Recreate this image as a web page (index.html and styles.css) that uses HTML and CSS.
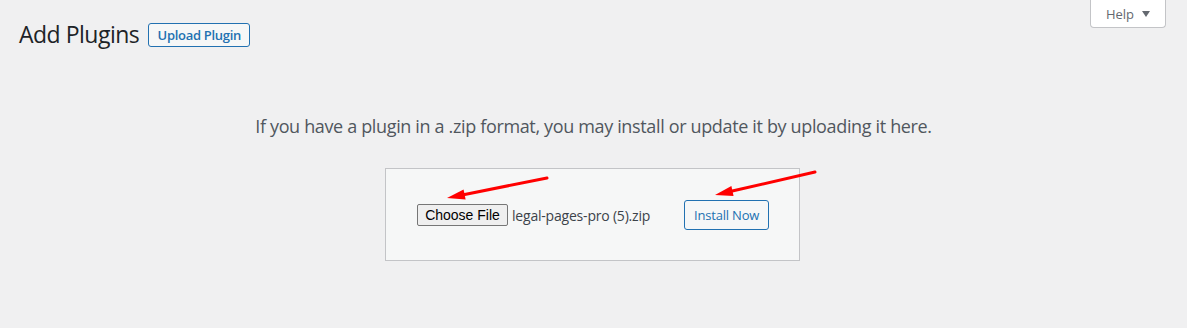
FILE: index.html
```html
<!DOCTYPE html>
<html lang="en">
<head>
  <meta charset="UTF-8" />
  <title>Add Plugins</title>
  <link rel="stylesheet" href="styles.css">
</head>
<body>
  <div class="help-tab">Help <span class="caret"></span></div>

  <div class="wrap">
    <div class="page-head">
      <h1>Add Plugins</h1>
      <a class="btn-outline small" href="#">Upload Plugin</a>
    </div>

    <p class="install-help">If you have a plugin in a .zip format, you may install or update it by uploading it here.</p>

    <div class="upload-box">
      <form class="upload-form">
        <span class="file-btn">Choose File</span>
        <span class="file-name">legal-pages-pro (5).zip</span>
        <span class="btn-outline install">Install Now</span>
      </form>
      <!-- annotation arrows -->
      <svg class="arrows" width="440" height="40" viewBox="0 0 440 40">
        <line x1="162" y1="10" x2="76" y2="27.2" stroke="#f00" stroke-width="3" stroke-linecap="round"/>
        <polygon points="62,30 80.6,31.4 78.6,21.6" fill="#f00"/>
        <line x1="430" y1="4" x2="344" y2="23.8" stroke="#f00" stroke-width="3" stroke-linecap="round"/>
        <polygon points="330,27 348.6,27.9 346.4,18.1" fill="#f00"/>
      </svg>
    </div>
  </div>
</body>
</html>
```

FILE: styles.css
```css
body {
  margin: 0;
  background: #f0f0f1;
  font-family: "Open Sans", "Noto Sans", sans-serif;
  color: #1d2327;
  position: relative;
  height: 328px;
  overflow: hidden;
}
.help-tab {
  position: absolute;
  top: -1px;
  right: 21px;
  width: 76px;
  height: 29px;
  background: #fff;
  border: 1px solid #c3c4c7;
  border-top: 0;
  border-radius: 0 0 4px 4px;
  box-sizing: border-box;
  font-size: 13px;
  color: #646970;
  display: flex;
  align-items: center;
  justify-content: center;
  gap: 8px;
  padding-top: 1px;
}
.caret {
  width: 0;
  height: 0;
  border-left: 4px solid transparent;
  border-right: 4px solid transparent;
  border-top: 6px solid #646970;
}
.wrap {
  padding: 20px 0 0 19px;
}
.page-head {
  display: flex;
  align-items: center;
  gap: 9px;
  height: 28px;
}
h1 {
  margin: 0;
  font-size: 23px;
  font-weight: 400;
  letter-spacing: -0.5px;
  color: #1d2327;
}
.btn-outline {
  border: 1px solid #2271b1;
  border-radius: 3px;
  background: #f6f7f7;
  color: #2271b1;
  text-decoration: none;
  box-sizing: border-box;
  display: inline-flex;
  align-items: center;
  justify-content: center;
}
.btn-outline.small {
  height: 24px;
  width: 102px;
  font-size: 13px;
  font-weight: 600;
  letter-spacing: -0.3px;
  margin-top: 1px;
}
.install-help {
  margin: 66px 0 0 -19px;
  text-align: center;
  font-size: 18px;
  color: #50575e;
  letter-spacing: -0.35px;
}
.upload-box {
  position: relative;
  width: 415px;
  height: 93px;
  box-sizing: border-box;
  margin: 30px 0 0 366px;
  background: #f6f7f7;
  border: 1px solid #c3c4c7;
}
.upload-form {
  display: flex;
  align-items: center;
  padding: 31px 0 0 31px;
}
.file-btn {
  font-family: "Liberation Sans", Arial, sans-serif;
  font-size: 14px;
  color: #000;
  background: #efefef;
  border: 1px solid #767676;
  border-radius: 2px;
  height: 22px;
  width: 91px;
  box-sizing: border-box;
  display: inline-flex;
  align-items: center;
  justify-content: center;
}
.file-name {
  margin-left: 4px;
  font-size: 14px;
  color: #3c434a;
  letter-spacing: -0.2px;
}
.btn-outline.install {
  margin-left: 34px;
  height: 30px;
  width: 85px;
  font-size: 13px;
  letter-spacing: -0.2px;
  border-radius: 3px;
}
.arrows {
  position: absolute;
  left: -1px;
  top: -1px;
  overflow: visible;
}
```
